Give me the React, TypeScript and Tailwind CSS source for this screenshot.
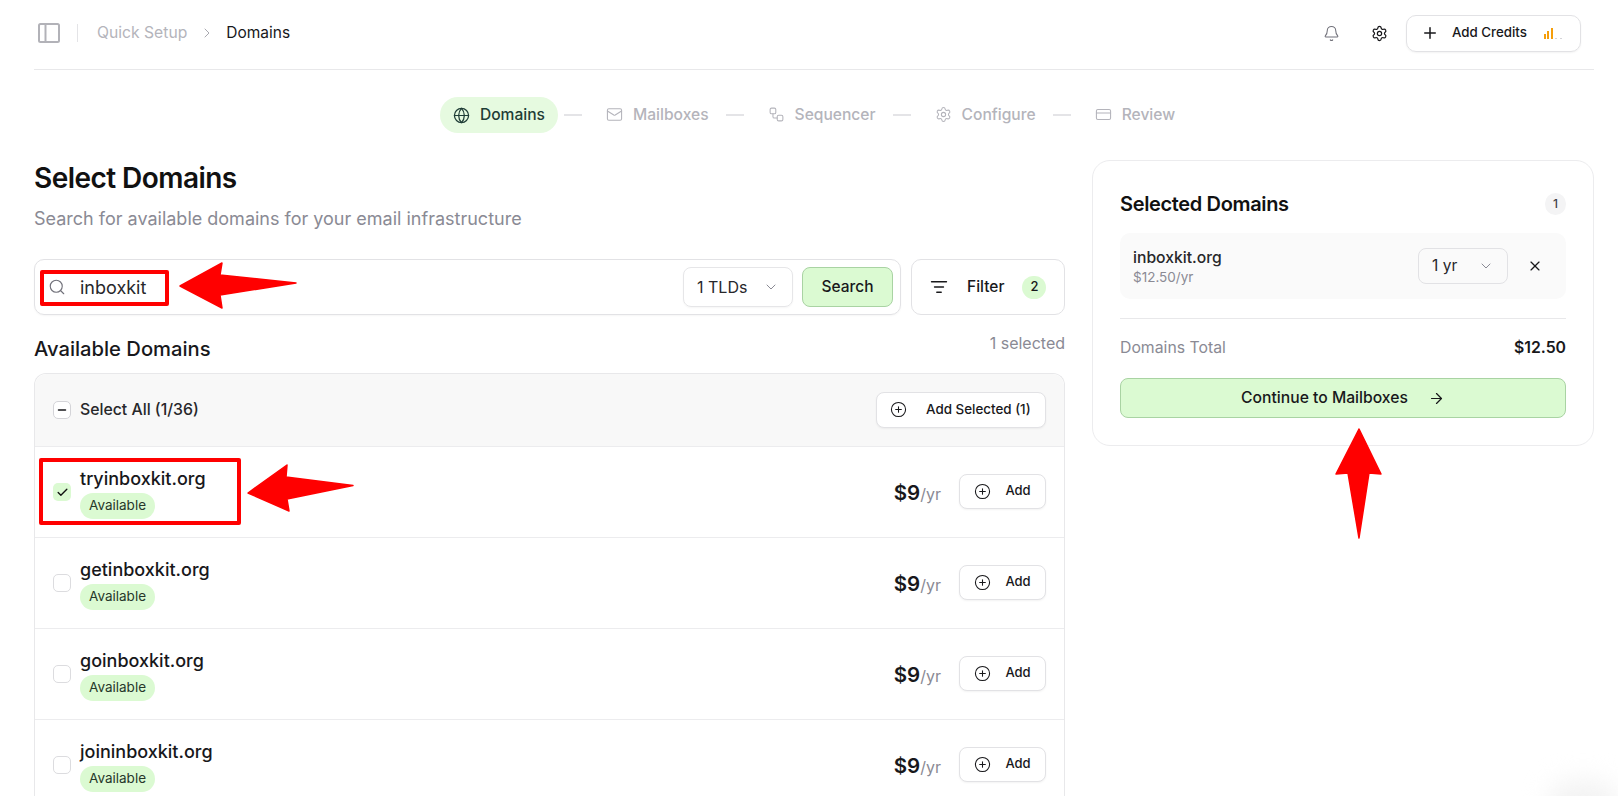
import {
  ArrowRight,
  Bell,
  Check,
  ChevronDown,
  ChevronRight,
  CirclePlus,
  CreditCard,
  Globe,
  ListFilter,
  Mail,
  Minus,
  Plus,
  Search,
  Settings,
  Workflow,
  X,
} from "lucide-react";

const steps = [
  { label: "Mailboxes", icon: Mail },
  { label: "Sequencer", icon: Workflow },
  { label: "Configure", icon: Settings },
  { label: "Review", icon: CreditCard },
];

const domains = [
  { name: "tryinboxkit.org", checked: true },
  { name: "getinboxkit.org", checked: false },
  { name: "goinboxkit.org", checked: false },
  { name: "joininboxkit.org", checked: false },
];

const Header = () => {
  return (
    <header className="flex h-[70px] items-center border-b border-[#e8e8ea] pb-[3px]">
      <svg width={22} height={20} viewBox="0 0 22 20" fill="none" stroke="#b2b2b8" strokeWidth={2} className="ml-[4px]">
        <rect x={1} y={1} width={20} height={18} rx={1.5} />
        <line x1={7.5} y1={1} x2={7.5} y2={19} />
      </svg>
      <div className="ml-[17px] h-[18px] w-px bg-[#e4e4e7]" />
      <span className="ml-[19px] text-[15.7px] text-[#b4b4bb]">Quick Setup</span>
      <ChevronRight size={16} strokeWidth={1.5} className="ml-[12px] text-[#a9a9b0]" />
      <span className="ml-[11px] text-[15.5px] text-[#18181b]">Domains</span>
      <div className="ml-auto flex items-center">
        <Bell size={17} strokeWidth={1.5} className="text-[#71717a]" />
        <Settings size={17} strokeWidth={1.75} className="ml-[31px] text-[#18181b]" />
        <button className="ml-[18px] mr-[13px] flex h-[37px] w-[175px] items-center rounded-[10px] border border-[#e2e2e5] pl-[14px] shadow-[0_1px_2px_rgba(0,0,0,0.05)]">
          <Plus size={18} strokeWidth={2} className="text-[#18181b]" />
          <span className="ml-[13px] text-[13.3px] font-medium text-[#18181b]">Add Credits</span>
          <span className="ml-[17px] flex h-[11px] items-end gap-[1.5px]">
            <i className="h-[5px] w-[2px] bg-[#f59e0b]" />
            <i className="h-[8px] w-[2px] bg-[#f59e0b]" />
            <i className="h-[11px] w-[2px] bg-[#f59e0b]" />
            <i className="ml-[1px] h-[1px] w-[2px] bg-[#d4d4d8]" />
            <i className="ml-[1px] h-[1px] w-[2px] bg-[#d4d4d8]" />
          </span>
        </button>
      </div>
    </header>
  );
};

const Stepper = () => {
  return (
    <nav className="mt-[27px] flex h-[36px] items-center justify-center pr-[2px]">
      <div className="flex h-[36px] items-center gap-[10px] rounded-full bg-[#e6fae0] px-[13px] text-[15.6px] font-medium text-[#1f3d36]">
        <Globe size={17} strokeWidth={1.75} />
        Domains
      </div>
      {steps.map((step) => (
        <div key={step.label} className="flex items-center">
          <div className="mx-[6px] h-[1.5px] w-[18px] bg-[#e4e4e7]" />
          <div className="flex items-center gap-[10px] pl-[18px] pr-[11px] text-[15.6px] font-medium text-[#b4b4bb]">
            <step.icon size={17} strokeWidth={1.5} />
            {step.label}
          </div>
        </div>
      ))}
    </nav>
  );
};

const AddButton = () => {
  return (
    <button className="mb-[2px] flex h-[35px] w-[87px] items-center justify-center gap-[14px] rounded-[8px] border border-[#e2e2e5] bg-white text-[13px] font-medium text-[#18181b] shadow-[0_1px_2px_rgba(0,0,0,0.05)]">
      <CirclePlus size={17} strokeWidth={1.5} />
      Add
    </button>
  );
};

const DomainRow = ({ name, checked }: { name: string; checked: boolean }) => {
  return (
    <div className="flex h-[91px] items-center border-t border-[#ececee] pl-[18px] pr-[18px]">
      {checked ? (
        <div className="flex h-[18px] w-[18px] items-center justify-center rounded-[5px] bg-[#dbfad2] text-[#111]">
          <Check size={13} strokeWidth={2.5} />
        </div>
      ) : (
        <div className="h-[18px] w-[18px] rounded-[5px] border border-[#dcdcdf] bg-white" />
      )}
      <div className="ml-[9px] flex flex-col items-start pt-[2px]">
        <span className="text-[18px] font-medium leading-[22px] text-[#18181b]">{name}</span>
        <span className="mt-[3px] flex h-[26px] items-center rounded-full bg-[#dbfad2] px-[9px] text-[13.5px] text-[#27382a]">
          Available
        </span>
      </div>
      <div className="ml-auto mr-[18px] mt-[2px] flex items-baseline">
        <span className="text-[20.5px] font-semibold text-[#18181b]">$9</span>
        <span className="text-[16px] text-[#8a8a94]">/yr</span>
      </div>
      <AddButton />
    </div>
  );
};

const SearchBar = () => {
  return (
    <div className="mt-[28px] flex gap-[10px]">
      <div className="flex h-[56px] flex-1 items-center rounded-[10px] border border-[#e2e2e5] pl-[13px] pr-[7px] shadow-[0_1px_2px_rgba(0,0,0,0.04)]">
        <Search size={18} strokeWidth={1.5} className="text-[#71717a]" />
        <span className="ml-[14px] text-[18px] text-[#27272a]">inboxkit</span>
        <button className="ml-auto flex h-[40px] w-[110px] items-center justify-between rounded-[8px] border border-[#e6e6e8] px-[13px] text-[16px] text-[#27272a] shadow-[0_1px_2px_rgba(0,0,0,0.04)]">
          1 TLDs
          <ChevronDown size={16} strokeWidth={1.5} className="text-[#8a8a94]" />
        </button>
        <button className="ml-[9px] h-[40px] w-[91px] rounded-[8px] border border-[#a9d3a3] bg-[#dbfad2] text-[15.5px] font-medium text-[#18181b]">
          Search
        </button>
      </div>
      <button className="flex h-[56px] w-[154px] items-center rounded-[10px] border border-[#e2e2e5] pl-[18px] text-[15.5px] font-medium text-[#18181b]">
        <ListFilter size={18} strokeWidth={1.75} />
        <span className="ml-[19px]">Filter</span>
        <span className="ml-[18px] flex h-[23px] w-[24px] items-center justify-center rounded-full bg-[#dbfad2] text-[13px]">
          2
        </span>
      </button>
    </div>
  );
};

const DomainList = () => {
  return (
    <div className="mt-[10px] rounded-t-[12px] border border-b-0 border-[#e8e8ea]">
      <div className="flex h-[72px] items-center rounded-t-[12px] bg-[#f8f8f8] pl-[18px] pr-[18px]">
        <div className="flex h-[18px] w-[18px] items-center justify-center rounded-[5px] border border-[#d4d4d8] bg-white text-[#18181b]">
          <Minus size={12} strokeWidth={3} />
        </div>
        <span className="ml-[9px] text-[15.8px] font-medium text-[#27272a]">Select All (1/36)</span>
        <button className="ml-auto mb-[1px] flex h-[36px] w-[170px] items-center gap-[19px] rounded-[8px] border border-[#e2e2e5] bg-white pl-[13px] text-[13.4px] font-medium text-[#18181b] shadow-[0_1px_2px_rgba(0,0,0,0.05)]">
          <CirclePlus size={17} strokeWidth={1.5} />
          Add Selected (1)
        </button>
      </div>
      {domains.map((d) => (
        <DomainRow key={d.name} name={d.name} checked={d.checked} />
      ))}
    </div>
  );
};

const SummaryCard = () => {
  return (
    <aside className="h-[286px] w-[502px] shrink-0 rounded-[18px] border border-[#ececee] px-[27px] pt-[32px]">
      <div className="flex h-[22px] items-center justify-between">
        <h2 className="text-[20px] font-semibold tracking-[-0.35px] text-[#111]">Selected Domains</h2>
        <span className="flex h-[22px] w-[21px] items-center justify-center rounded-full bg-[#f4f4f5] text-[12px] font-medium text-[#3f3f46]">
          1
        </span>
      </div>
      <div className="mt-[18px] flex h-[66px] items-center rounded-[10px] bg-[#fafafa] pl-[13px] pr-[23px]">
        <div className="flex flex-col pt-[2px]">
          <span className="text-[15.7px] font-medium leading-[20px] text-[#27272a]">inboxkit.org</span>
          <span className="text-[13.5px] leading-[18px] text-[#8a8a94]">$12.50/yr</span>
        </div>
        <button className="ml-auto flex h-[36px] w-[90px] items-center justify-between rounded-[8px] border border-[#e2e2e5] px-[13px] text-[15.5px] text-[#27272a]">
          1 yr
          <ChevronDown size={16} strokeWidth={1.5} className="text-[#8a8a94]" />
        </button>
        <X size={16} strokeWidth={1.75} className="ml-[19px] text-[#18181b]" />
      </div>
      <div className="mt-[19px] border-t border-[#e8e8ea] pt-[19px]">
        <div className="flex h-[20px] items-center justify-between text-[15.8px]">
          <span className="text-[#8a8a94]">Domains Total</span>
          <span className="font-semibold text-[#18181b]">$12.50</span>
        </div>
        <button className="mt-[20px] flex h-[40px] w-full items-center justify-center gap-[20px] rounded-[8px] border border-[#a9d3a3] bg-[#dbfad2] text-[15.7px] font-medium text-[#18181b]">
          Continue to Mailboxes
          <ArrowRight size={17} strokeWidth={1.75} />
        </button>
      </div>
    </aside>
  );
};

const Annotations = () => {
  return (
    <svg
      className="pointer-events-none absolute left-0 top-0"
      width={1618}
      height={796}
      viewBox="0 0 1618 796"
      fill="#ff0000"
      stroke="#ff0000"
      strokeWidth={1.5}
      strokeLinejoin="round"
    >
      <rect x={42} y={272} width={125} height={32} fill="none" strokeWidth={4} />
      <rect x={41} y={460} width={198} height={63} fill="none" strokeWidth={4} />
      <path d="M180 286 L222 263 L220 275 L296 283 L220 295 L222 308 Z" />
      <path d="M248 493 L287 465 L286 477 L353 485.5 L287 499 L289 511 Z" />
      <path d="M1359 429 L1336 474 L1348 473 L1359 538 L1369 473 L1381 474 Z" />
    </svg>
  );
};

export default function App() {
  return (
    <div className="relative h-[796px] w-[1618px] overflow-hidden bg-white pl-[34px] pr-[24px] font-['Inter',sans-serif]">
      <Header />
      <Stepper />
      <div className="mt-[27px] flex gap-[27px]">
        <main className="min-w-0 flex-1">
          <h1 className="text-[28px] font-semibold leading-[36px] text-[#111] tracking-[-0.55px]">
            Select Domains
          </h1>
          <p className="mt-[11px] text-[18px] leading-[24px] text-[#8a8a94]">
            Search for available domains for your email infrastructure
          </p>
          <SearchBar />
          <div className="mt-[12px] flex items-start justify-between">
            <h2 className="mt-[8px] text-[20.2px] font-medium leading-[28px] text-[#18181b]">Available Domains</h2>
            <span className="mt-[4px] text-[16px] leading-[24px] text-[#8a8a94]">1 selected</span>
          </div>
          <DomainList />
        </main>
        <SummaryCard />
      </div>
      <div className="absolute bottom-[-34px] right-0 h-[50px] w-[70px] rounded-full bg-[#f3f3f3] blur-md" />
      <Annotations />
    </div>
  );
}
